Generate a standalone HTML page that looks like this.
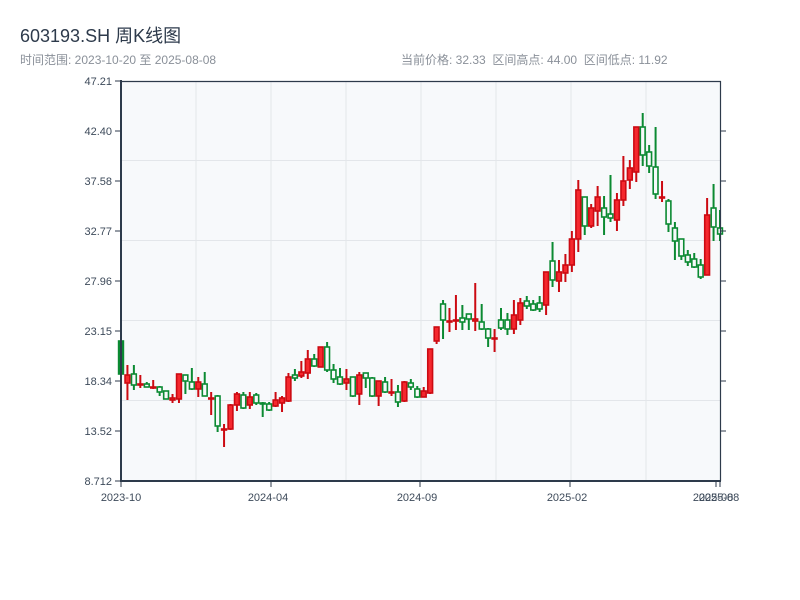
<!DOCTYPE html>
<html><head><meta charset="utf-8"><style>
html,body{margin:0;padding:0;background:#fff;width:800px;height:600px;overflow:hidden}
body{font-family:"Liberation Sans","Noto Sans CJK SC",sans-serif;position:relative}
.t{position:absolute;left:20px;top:22px;font-size:18px;color:#2d3a4b}
.s{position:absolute;top:51px;font-size:12px;color:#8a9099;white-space:pre}
</style></head><body>
<div class="t">603193.SH 周K线图</div>
<div class="s" style="left:20px">时间范围: 2023-10-20 至 2025-08-08</div>
<div class="s" style="left:401px">当前价格: 32.33  区间高点: 44.00  区间低点: 11.92</div>
<svg id="c" width="800" height="600" style="position:absolute;left:0;top:0" xmlns="http://www.w3.org/2000/svg" font-family="Liberation Sans, sans-serif" font-size="11" fill="#3d4a5a">
<rect x="121" y="81" width="600" height="400" fill="#f7f9fb"/>
<g stroke="#e3e6ea" stroke-width="1">
<line x1="196" y1="81" x2="196" y2="481"/><line x1="271" y1="81" x2="271" y2="481"/><line x1="346" y1="81" x2="346" y2="481"/><line x1="421" y1="81" x2="421" y2="481"/><line x1="496" y1="81" x2="496" y2="481"/><line x1="571" y1="81" x2="571" y2="481"/><line x1="646" y1="81" x2="646" y2="481"/>
<line x1="121" y1="160.5" x2="721" y2="160.5"/><line x1="121" y1="240.5" x2="721" y2="240.5"/><line x1="121" y1="320.5" x2="721" y2="320.5"/><line x1="121" y1="400.5" x2="721" y2="400.5"/>
</g>
<g id="k"></g>
<g stroke="#2d3a4b">
<line x1="121" y1="81.5" x2="721" y2="81.5" stroke-width="1.2"/>
<line x1="720.5" y1="81" x2="720.5" y2="481" stroke-width="1.2"/>
<line x1="121" y1="80" x2="121" y2="482" stroke-width="2"/>
<line x1="120" y1="481" x2="721" y2="481" stroke-width="2"/>
<g stroke-width="1">
<line x1="115" y1="81" x2="121" y2="81"/><line x1="115" y1="131" x2="121" y2="131"/><line x1="115" y1="181" x2="121" y2="181"/><line x1="115" y1="231" x2="121" y2="231"/><line x1="115" y1="281" x2="121" y2="281"/><line x1="115" y1="331" x2="121" y2="331"/><line x1="115" y1="381" x2="121" y2="381"/><line x1="115" y1="431" x2="121" y2="431"/><line x1="115" y1="481" x2="121" y2="481"/>
<line x1="721" y1="131" x2="726" y2="131"/><line x1="721" y1="181" x2="726" y2="181"/><line x1="721" y1="231" x2="726" y2="231"/><line x1="721" y1="281" x2="726" y2="281"/><line x1="721" y1="331" x2="726" y2="331"/><line x1="721" y1="381" x2="726" y2="381"/><line x1="721" y1="431" x2="726" y2="431"/>
<line x1="121" y1="481" x2="121" y2="487"/><line x1="271" y1="481" x2="271" y2="487"/><line x1="420" y1="481" x2="420" y2="487"/><line x1="570" y1="481" x2="570" y2="487"/><line x1="716" y1="481" x2="716" y2="487"/><line x1="720" y1="481" x2="720" y2="487"/>
</g></g>
<g text-anchor="end">
<text x="112" y="85">47.21</text><text x="112" y="135">42.40</text><text x="112" y="185">37.58</text><text x="112" y="235">32.77</text><text x="112" y="285">27.96</text><text x="112" y="335">23.15</text><text x="112" y="385">18.34</text><text x="112" y="435">13.52</text><text x="112" y="485">8.712</text>
</g>
<g text-anchor="middle">
<text x="121" y="501">2023-10</text><text x="268" y="501">2024-04</text><text x="417" y="501">2024-09</text><text x="567" y="501">2025-02</text><text x="713" y="501">2025-08</text><text x="719" y="501">2025-08</text>
</g>
</svg>
<script>
var d=[
"g",341,374,341,374,"r",375,383,365,400,"g",374,385,365,390,"r",384,385,375,388,"g",384,387,382,387,"r",387,388,380,389,"g",387,392,386,396,"g",391,399,391,399,"r",398,400,394,403,"r",374,399,374,403,
"g",375,381,375,394,"g",382,389,368,390,"r",382,389,377,397,"g",384,396,372,396,"r",398,399,392,415,"g",396,426,395,432,"r",429,430,424,447,"r",405,429,404,430,"r",394,405,392,411,"g",395,408,392,409,
"r",397,405,392,409,"g",395,403,393,405,"g",403,404,402,417,"g",404,410,402,411,"r",400,406,392,407,"r",398,403,396,412,"r",377,401,373,402,"g",375,378,369,381,"r",372,376,361,378,"r",359,373,350,379,
"g",359,366,354,367,"r",347,367,347,367,"g",347,370,342,372,"g",370,379,364,383,"g",377,384,368,385,"r",379,383,369,390,"g",377,396,377,397,"r",375,394,372,405,"g",373,378,373,388,"g",378,396,377,397,
"r",381,396,381,406,"g",382,392,377,393,"r",392,393,379,396,"g",392,402,385,407,"r",382,401,381,402,"g",383,387,379,390,"g",389,397,386,398,"r",391,397,387,397,"r",349,393,349,394,"r",327,341,327,344,
"g",304,320,300,339,"r",321,322,308,332,"r",320,321,295,330,"g",318,322,305,330,"g",314,319,314,330,"r",319,321,283,331,"g",322,329,304,330,"g",329,338,328,347,"r",338,339,329,352,"g",320,328,308,330,
"g",320,329,313,335,"r",315,329,300,334,"r",303,320,298,325,"g",301,306,296,309,"g",304,310,300,311,"g",303,309,296,312,"r",272,305,272,315,"g",261,280,242,287,"r",272,281,260,292,"r",265,273,254,282,
"r",239,265,231,272,"r",190,239,180,252,"g",197,226,197,235,"r",208,226,204,228,"r",197,211,186,226,"g",208,217,196,235,"g",214,218,175,222,"r",200,220,193,231,"r",181,200,156,206,"r",168,180,160,189,
"r",127,172,127,182,"g",127,155,113,166,"g",152,166,145,173,"g",167,194,127,199,"r",197,198,181,202,"g",201,224,199,232,"g",228,241,222,260,"g",239,256,239,260,"g",255,262,250,266,"g",259,267,253,268,
"g",265,277,259,279,"r",215,275,198,275,"g",208,227,184,241,"g",228,234,210,241];
var n=d.length/5,step=599/(n-1),h="";
for(var i=0;i<n;i++){var t=d[i*5],bt=d[i*5+1],bb=d[i*5+2],wt=d[i*5+3],wb=d[i*5+4];
var x=121+i*step,sc=t=="r"?"#cc0a12":"#0b8a32",fc=t=="r"?"#f5282e":(i==0?"#0b8a32":"#f7f9fb");
h+='<line x1="'+x+'" y1="'+wt+'" x2="'+x+'" y2="'+wb+'" stroke="'+sc+'" stroke-width="2"/>';
var bh=Math.max(bb-bt,1);
h+='<rect x="'+(x-2.4)+'" y="'+bt+'" width="4.8" height="'+bh+'" fill="'+fc+'" stroke="'+sc+'" stroke-width="1.6"/>';}
document.getElementById("k").innerHTML=h;
</script>
</body></html>
